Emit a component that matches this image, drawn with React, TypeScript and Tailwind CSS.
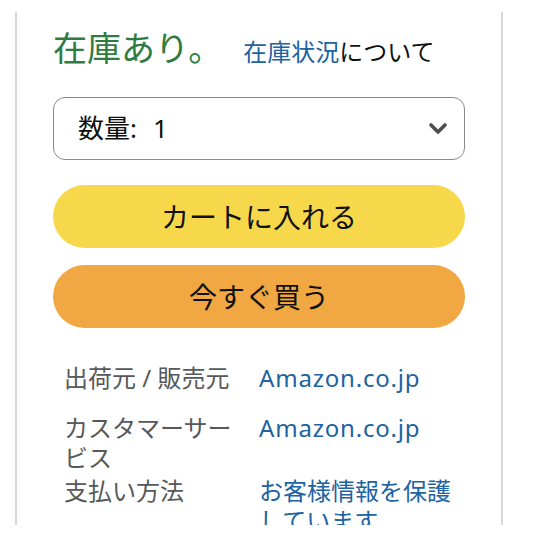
import React from "react";

const FONT = { fontFamily: '"Noto Sans", "Noto Sans CJK JP", sans-serif' };

function Row({
  label,
  value,
  className,
  latin,
}: {
  label: React.ReactNode;
  value: React.ReactNode;
  className?: string;
  latin?: boolean;
}) {
  return (
    <div className={"grid grid-cols-[180px_1fr] gap-x-[15px] " + (className ?? "")}>
      <div className="text-[#565959]">{label}</div>
      <div className={"text-[#2162a1] " + (latin ? "tracking-[0.8px]" : "")}>{value}</div>
    </div>
  );
}

export default function App() {
  return (
    <div className="w-[549px] h-[538px] bg-white overflow-hidden" style={FONT}>
      <div className="ml-[15px] pt-[12px]">
        <div className="w-[488px] h-[513px] border-x-2 border-[#d5d9d9] overflow-hidden px-[36px] pt-[14px]">
          <div className="flex items-baseline h-[44px] leading-[44px]">
            <span className="text-[34px] text-[#307c40]">在庫あり。</span>
            <span className="ml-[21px] text-[24px] text-[#0f1111]">
              <span className="text-[#2162a1]">在庫状況</span>について
            </span>
          </div>

          <div className="mt-[27px] h-[63px] rounded-[12px] border-[1.5px] border-[#888c8c] flex items-center justify-between pl-[24px] pr-[16px] text-[#0f1111]">
            <span className="text-[26px]">
              数量:<span className="ml-[16px]">1</span>
            </span>
            <svg width="20" height="14" viewBox="0 0 20 14">
              <polyline
                points="3,3 10,10 17,3"
                fill="none"
                stroke="#4d4f4f"
                strokeWidth="3.6"
                strokeLinecap="round"
                strokeLinejoin="round"
              />
            </svg>
          </div>

          <div className="mt-[25px] h-[63px] rounded-full bg-[#f7d84b] flex items-center justify-center text-[28px] text-[#0f1111]">
            カートに入れる
          </div>
          <div className="mt-[17px] h-[63px] rounded-full bg-[#f1a742] flex items-center justify-center text-[28px] text-[#0f1111]">
            今すぐ買う
          </div>

          <div className="mt-[35px] pl-[11px] text-[24px] leading-[30px]">
            <Row label="出荷元 / 販売元" value="Amazon.co.jp" latin className="mb-[20px]" />
            <Row label="カスタマーサービス" value="Amazon.co.jp" latin className="mb-[3px]" />
            <Row label="支払い方法" value="お客様情報を保護しています" />
          </div>
        </div>
      </div>
    </div>
  );
}
